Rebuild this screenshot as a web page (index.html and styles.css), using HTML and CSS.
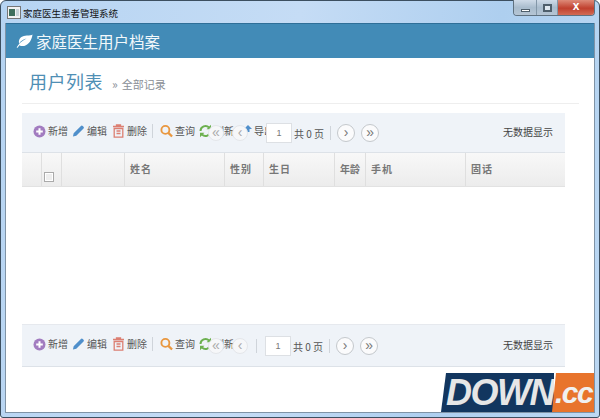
FILE: index.html
```html
<!DOCTYPE html>
<html lang="zh">
<head>
<meta charset="utf-8">
<title>家庭医生患者管理系统</title>
<link rel="stylesheet" href="styles.css">
</head>
<body>
<div class="window">
  <div class="titlebar">
    <svg class="app-icon" width="14" height="13" viewBox="0 0 14 13"><rect x=".5" y=".5" width="13" height="12" fill="#f2f2f2" stroke="#777"/><rect x="2" y="3" width="6" height="7" fill="#3f6f5c"/><rect x="9" y="3" width="3" height="7" fill="#c8d4d8"/></svg>
    <span class="title-text">家庭医生患者管理系统</span>
    <div class="controls">
      <div class="ctl ctl-min"><i></i></div>
      <div class="ctl ctl-max"><i></i></div>
      <div class="ctl ctl-close">x</div>
    </div>
  </div>
  <div class="client">
    <header class="app-header">
      <svg class="leaf" width="17" height="14" viewBox="0 0 17 14"><path d="M16.5.6C15.6 1.6 13.8 1.4 10.8 1.6 6.6 1.9 3.4 3.6 2.9 7.3 2.8 8.2 2.9 9 3.2 9.6 4.6 7.2 7 5.5 10.6 4.6 7.6 6.1 4.6 8.2 2.5 10.8 1.7 11.8 1.1 12.7.6 13.5L1.7 13.7C2.2 12.8 2.8 11.9 3.5 11.2 4.6 12 6.2 12.3 8.2 11.9 13.2 10.9 15.8 5.6 16.5.6Z" fill="#fff"/></svg>
      <span class="app-name">家庭医生用户档案</span>
    </header>
    <div class="page-head">
      <h1 class="page-title">用户列表</h1>
      <span class="page-sub"><b>»</b>全部记录</span>
    </div>
    <section class="toolbar toolbar-top">
      <div class="actions">
        <span class="act act-add"><svg class="ico" width="13" height="13" viewBox="0 0 13 13"><circle cx="6.5" cy="6.5" r="6" fill="#a27cc0"/><path d="M6.5 3.2v6.6M3.200 6.500h6.600" stroke="#fff" stroke-width="2"/></svg>新增</span>
        <span class="act act-edit"><svg class="ico" width="13" height="14" viewBox="0 0 14 14"><path d="M1 13l.8-3.600L9.600 1.600a1.400 1.400 0 0 1 2 0l.8.8a1.400 1.400 0 0 1 0 2l-7.800 7.800z" fill="#4f8fcb"/></svg>编辑</span>
        <span class="act act-del"><svg class="ico" width="13" height="14" viewBox="0 0 13 14"><path d="M4.500 2V1h4v1M1 2.500h11M2.200 4.500h8.600v8.700H2.200zM4.500 7h4M4.500 9.500h4" fill="none" stroke="#dc7f72" stroke-width="1.300"/></svg>删除</span>
        <span class="sep"></span>
        <span class="act act-search"><svg class="ico" width="13" height="14" viewBox="0 0 14 14"><circle cx="5.800" cy="5.800" r="4.300" fill="none" stroke="#e9973f" stroke-width="2"/><path d="M9 9l4 4" stroke="#e9973f" stroke-width="2.400"/></svg>查询</span>
        <span class="act act-refresh"><svg class="ico" width="13" height="14" viewBox="0 0 13 14"><path d="M1.500 7a5 5 0 0 1 8.500-3.500M11.500 7A5 5 0 0 1 3 10.500" fill="none" stroke="#6cb04f" stroke-width="2"/><path d="M12 .8v4.400H7.600zM1 13.200V8.800h4.400z" fill="#6cb04f"/></svg>刷新</span>
        <span class="act act-export"><svg class="ico ico-export" width="10" height="14" viewBox="0 0 10 14"><path d="M5 1l4 4H1zM3.500 5h3v3h-3z" fill="#4f8fcb"/></svg>导出</span>
      </div>
      <div class="status">无数据显示</div>
      <div class="pager pager-top">
        <span class="pg pg-first">«</span>
        <span class="pg pg-prev">‹</span>
        <span class="pg-input">1</span>
        <span class="pg-total">共 0 页</span>
        <span class="sep"></span>
        <span class="pg pg-next">›</span>
        <span class="pg pg-last">»</span>
      </div>
    </section>
    <div class="table-head">
      <div class="th c-num"></div>
      <div class="th c-check"><span class="checkbox"></span></div>
      <div class="th c-blank"></div>
      <div class="th c-name">姓名</div>
      <div class="th c-sex">性别</div>
      <div class="th c-birth">生日</div>
      <div class="th c-age">年龄</div>
      <div class="th c-mobile">手机</div>
      <div class="th c-tel">固话</div>
    </div>
    <div class="table-body"></div>
    <section class="toolbar toolbar-bottom">
      <div class="actions">
        <span class="act act-add"><svg class="ico" width="13" height="13" viewBox="0 0 13 13"><circle cx="6.500" cy="6.500" r="6" fill="#a27cc0"/><path d="M6.500 3.200v6.600M3.200 6.500h6.600" stroke="#fff" stroke-width="2"/></svg>新增</span>
        <span class="act act-edit"><svg class="ico" width="13" height="14" viewBox="0 0 14 14"><path d="M1 13l.8-3.600L9.600 1.600a1.400 1.400 0 0 1 2 0l.8.8a1.400 1.400 0 0 1 0 2l-7.800 7.800z" fill="#4f8fcb"/></svg>编辑</span>
        <span class="act act-del"><svg class="ico" width="13" height="14" viewBox="0 0 13 14"><path d="M4.500 2V1h4v1M1 2.500h11M2.200 4.500h8.600v8.700H2.200zM4.500 7h4M4.500 9.500h4" fill="none" stroke="#dc7f72" stroke-width="1.300"/></svg>删除</span>
        <span class="sep"></span>
        <span class="act act-search"><svg class="ico" width="13" height="14" viewBox="0 0 14 14"><circle cx="5.800" cy="5.800" r="4.300" fill="none" stroke="#e9973f" stroke-width="2"/><path d="M9 9l4 4" stroke="#e9973f" stroke-width="2.400"/></svg>查询</span>
        <span class="act act-refresh"><svg class="ico" width="13" height="14" viewBox="0 0 13 14"><path d="M1.500 7a5 5 0 0 1 8.500-3.500M11.500 7A5 5 0 0 1 3 10.500" fill="none" stroke="#6cb04f" stroke-width="2"/><path d="M12 .8v4.400H7.600zM1 13.200V8.800h4.400z" fill="#6cb04f"/></svg>刷新</span>
      </div>
      <div class="status">无数据显示</div>
      <div class="pager pager-bottom">
        <span class="pg pg-first">«</span>
        <span class="pg pg-prev">‹</span>
        <span class="sep sep-left"></span>
        <span class="pg-input">1</span>
        <span class="pg-total">共 0 页</span>
        <span class="sep"></span>
        <span class="pg pg-next">›</span>
        <span class="pg pg-last">»</span>
      </div>
    </section>
  </div>
</div>
<div class="watermark"><span class="wm-down">DOWN</span><span class="wm-cc">.cc</span></div>
</body>
</html>
```

FILE: styles.css
```css
* { box-sizing: border-box; }
html, body { margin: 0; padding: 0; }
body {
  width: 600px;
  height: 418px;
  overflow: hidden;
  position: relative;
  font-family: "Noto Sans CJK SC", "Liberation Sans", sans-serif;
  background: #fff;
}
.window {
  width: 600px;
  height: 418px;
  display: flex;
  flex-direction: column;
  padding: 0 4px 4px;
  border: 1px solid #3c4f60;
  border-radius: 6px 6px 3px 3px;
  background: linear-gradient(100deg, #b6d4f2 0%, #c5dcf5 45%, #aecfef 75%, #bcd8f3 100%);
}
.titlebar {
  height: 22px;
  flex: none;
  display: flex;
  align-items: center;
  position: relative;
  padding: 1px 0 0 2px;
}
.app-icon { flex: none; margin-right: 2px; }
.title-text { font-size: 9.5px; color: #111; line-height: 14px; }
.controls {
  position: absolute;
  top: -1px;
  right: 0;
  display: flex;
  height: 16px;
  border: 1px solid #5f7180;
  border-top: 0;
  border-radius: 0 0 4px 4px;
  overflow: hidden;
}
.ctl {
  height: 100%;
  display: flex;
  align-items: center;
  justify-content: center;
  background: linear-gradient(#cfdbe8, #a9bccd 50%, #b5c5d4);
  border-right: 1px solid #8397a8;
}
.ctl-min { width: 23px; }
.ctl-min i { width: 9px; height: 3px; margin-top: 5px; background: #fff; border: 1px solid #4f5f6c; }
.ctl-max { width: 21px; }
.ctl-max i { width: 9px; height: 8px; background: #dfe8f0; border: 2px solid #4f5f6c; }
.ctl-close {
  width: 36px;
  border-right: 0;
  background: linear-gradient(#dd8a78, #c0402e 55%, #d26b55);
  color: #fff;
  font: 700 12px/12px "Liberation Sans", sans-serif;
  padding-bottom: 3px;
}
.client {
  flex: 1;
  min-height: 0;
  display: flex;
  flex-direction: column;
  background: #fff;
  padding: 0 29px 0 16px;
  border-left: 1px solid #7f93a6;
  border-right: 1px solid #7f93a6;
  border-bottom: 1px solid #7f93a6;
}
.app-header {
  height: 35px;
  flex: none;
  margin: 0 -29px 0 -16px;
  padding: 0 0 1px 10px;
  display: flex;
  align-items: center;
  background: #428bb7;
  border-top: 1px solid #2f6f98;
  color: #fff;
}
.leaf { flex: none; margin-right: 3px; }
.app-name { font-size: 15.5px; line-height: 20px; color: #f2f8fb; }
.page-head {
  height: 46px;
  flex: none;
  margin-right: -14px;
  padding: 11px 0 0 7px;
  display: flex;
  align-items: baseline;
  border-bottom: 1px solid #eeeeee;
}
.page-title {
  margin: 0;
  font-size: 18px;
  font-weight: 400;
  line-height: 24px;
  letter-spacing: .5px;
  color: #4f8fb5;
}
.page-sub { margin-left: 9px; font-size: 11px; color: #8a8f96; }
.page-sub b { font-weight: 400; font-size: 12px; margin-right: 4px; }
.toolbar {
  position: relative;
  flex: none;
  display: flex;
  align-items: center;
  justify-content: space-between;
  padding: 0 12px 0 11px;
  background: #eff3f8;
  border-bottom: 1px solid #dde2e8;
  font-size: 10px;
  color: #555;
}
.toolbar-top { height: 40px; margin-top: 9px; }
.toolbar-bottom { height: 43px; border-top: 1px solid #e6e9ee; }
.actions { display: flex; align-items: center; margin-top: -3px; }
.act { display: flex; align-items: center; white-space: nowrap; line-height: 14px; }
.ico { flex: none; margin-right: 2px; }
.ico-export { margin-right: 1px; }
.act-edit { margin-left: 4px; }
.act-del { margin-left: 5px; }
.sep { width: 1px; height: 14px; background: #cfd4da; flex: none; }
.actions .sep { margin: 0 7px 0 5px; }
.act-refresh { margin-left: 4px; }
.act-export { margin-left: 9px; }
.status { font-size: 10px; color: #444; margin-top: -3px; }
.pager {
  position: absolute;
  left: 186px;
  top: 10px;
  display: flex;
  align-items: center;
  height: 20px;
}
.pager-bottom { top: 11px; }
.pg {
  width: 18px;
  height: 18px;
  flex: none;
  display: flex;
  align-items: center;
  justify-content: center;
  border-radius: 50%;
  background: #fbfbfc;
  border: 1px solid #c4c8cc;
  color: #777;
  font: 14px/14px "Liberation Sans", sans-serif;
  padding-bottom: 2px;
}
.pg-first, .pg-prev {
  width: 16px;
  height: 16px;
  border-color: #e4e6ea;
  color: #aaa;
  background: #f6f7f9;
}
.pg-prev { margin-left: 8px; }
.pg-input {
  width: 26px;
  height: 20px;
  flex: none;
  margin-left: 18px;
  display: flex;
  align-items: center;
  justify-content: center;
  background: #fff;
  border: 1px solid #dde0e4;
  color: #777;
  font: 9px "Liberation Sans", sans-serif;
}
.sep-left { margin-left: 8px; }
.pager-bottom .pg-input { margin-left: 8px; }
.pg-total { margin: 0 6px 0 2px; white-space: nowrap; color: #555; }
.pg-next { margin-left: 6px; }
.pg-last { margin-left: 6px; }
.table-head {
  height: 34px;
  flex: none;
  display: flex;
  background: linear-gradient(#f8f8f8, #ececec);
  border-bottom: 1px solid #e2e2e2;
  font-size: 10px;
  font-weight: 700;
  color: #777;
}
.th {
  border-right: 1px solid #dfdfdf;
  display: flex;
  align-items: center;
  padding: 0 0 2px 5px;
  letter-spacing: 1px;
}
.c-num { width: 20px; }
.c-check { width: 20px; padding: 14px 0 0 2px; }
.c-blank { width: 63px; }
.c-name { width: 100px; }
.c-sex { width: 39px; }
.c-birth { width: 71px; }
.c-age { width: 31px; letter-spacing: 0; }
.c-mobile { width: 100px; }
.c-tel { flex: 1; border-right: 0; }
.checkbox {
  width: 10px;
  height: 10px;
  border: 1px solid #aaa;
  background: #eee;
  box-shadow: inset 0 0 0 1px #fff;
}
.table-body { height: 137px; flex: none; }
.watermark {
  position: absolute;
  left: 441px;
  top: 373px;
  width: 153px;
  height: 39px;
  display: flex;
  font: italic 700 36px/39px "Liberation Sans", sans-serif;
  overflow: hidden;
}
.wm-down {
  width: 113px;
  flex: none;
  padding-left: 5px;
  background: #12365f;
  color: #e6e6e6;
  letter-spacing: -1.5px;
  clip-path: polygon(5px 0, 100% 0, 100% 100%, 0 100%);
}
.wm-cc {
  flex: 1;
  margin-left: -2px;
  padding-left: 3px;
  background: #e8742c;
  color: #f0f0f0;
  font-size: 30px;
  letter-spacing: -1.5px;
  white-space: nowrap;
  clip-path: polygon(4px 0, 100% 0, 100% 100%, 0 100%);
}
```
